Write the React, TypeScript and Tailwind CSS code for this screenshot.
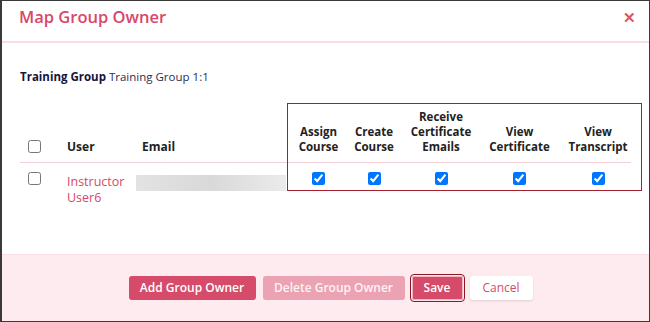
import React from "react";

const permissions = [
  { key: "assign", label: ["Assign", "Course"] },
  { key: "create", label: ["Create", "Course"] },
  { key: "receive", label: ["Receive", "Certificate", "Emails"] },
  { key: "viewCert", label: ["View", "Certificate"] },
  { key: "viewTranscript", label: ["View", "Transcript"] },
];

const cols = "grid grid-cols-[47px_75px_147px_59px_52px_82px_75px_82px]";

export default function App() {
  return (
    <div
      className="relative flex h-[322px] w-[650px] flex-col overflow-hidden border border-l-2 border-[#3a3a3a] bg-white"
      style={{ fontFamily: '"Open Sans", "Liberation Sans", sans-serif' }}
    >
      {/* header */}
      <div className="flex h-[42px] shrink-0 items-center justify-between border-b-2 border-[#f8dde4] pb-[8px] pl-[17px] pr-[13px]">
        <h2 className="text-[16.5px] font-semibold leading-none text-[#d9466b]">Map Group Owner</h2>
        <span className="text-[15px] font-bold leading-none text-[#e0506f]">✕</span>
      </div>

      {/* body */}
      <div className="relative flex-1 px-[18px]">
        <p className="mt-[25px] text-[11.5px] leading-[18px] text-[#2b2b55]">
          <span className="font-bold text-[#14143c]">Training Group</span> Training Group 1:1
        </p>

        <div className="mt-[23px]">
          <div className={`${cols} items-end border-b border-[#f3cfd8] pb-[8px] text-[11.5px] font-bold leading-[15px] text-[#222]`}>
            <div className="pl-[8px] pb-[1px]">
              <input type="checkbox" className="m-0 block h-[13px] w-[13px]" />
            </div>
            <div className="text-[12px]">User</div>
            <div className="text-[12px]">Email</div>
            {permissions.map((p) => (
              <div key={p.key} className="text-center">
                {p.label.map((l) => (
                  <div key={l}>{l}</div>
                ))}
              </div>
            ))}
          </div>

          <div className={`${cols} items-start pt-[9px]`}>
            <div className="pl-[8px]">
              <input type="checkbox" className="m-0 block h-[13px] w-[13px]" />
            </div>
            <div className="mt-[2px] text-[12.5px] leading-[16px] text-[#d9466b]">
              <div>Instructor</div>
              <div>User6</div>
            </div>
            <div className="-ml-[6px] pt-[3px]">
              <div className="h-[16px] w-[150px] bg-gradient-to-r from-[#e3e3e3] via-[#d9d9d9] to-[#ebebeb]" />
            </div>
            {permissions.map((p) => (
              <div key={p.key} className="flex justify-center">
                <input type="checkbox" defaultChecked className="m-0 block h-[13px] w-[13px]" />
              </div>
            ))}
          </div>
        </div>

        {/* highlight box */}
        <div className="pointer-events-none absolute left-[285px] top-[60px] h-[88px] w-[355px] border-[1.5px] border-[#a3202c]" />
      </div>

      {/* footer */}
      <div className="flex h-[67px] shrink-0 items-center justify-center gap-[7px] border-t border-[#f8dde4] bg-[#fdebef] pl-[10px]">
        <button className="h-[24px] w-[127px] rounded-[3px] bg-[#d64b69] text-[12px] font-semibold text-white">
          Add Group Owner
        </button>
        <button className="h-[24px] w-[142px] rounded-[3px] bg-[#eba2b2] text-[12px] font-semibold text-[#fdf3f5]">
          Delete Group Owner
        </button>
        <button className="h-[24px] w-[51px] rounded-[2px] bg-[#d64b69] text-[12px] font-semibold text-white outline outline-1 outline-offset-[1px] outline-[#8e1622] ring-1 ring-inset ring-white/60">
          Save
        </button>
        <button className="h-[24px] w-[63px] rounded-[3px] bg-white text-[12px] text-[#d64b69] shadow-[0_1px_2px_rgba(0,0,0,0.12)]">
          Cancel
        </button>
      </div>
    </div>
  );
}
